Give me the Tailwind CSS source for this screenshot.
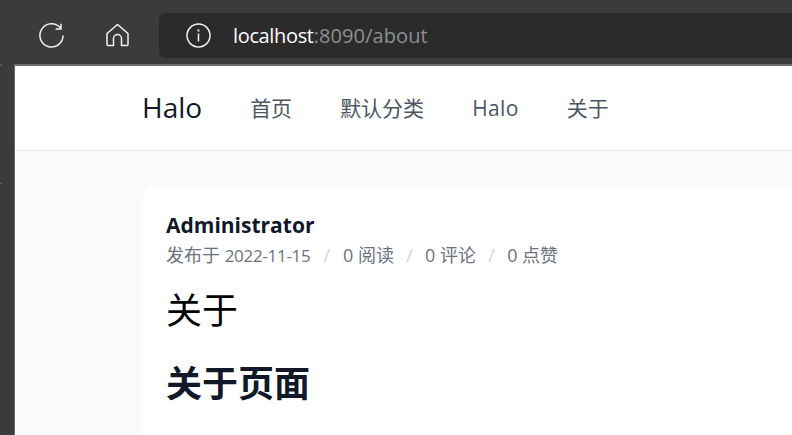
<!DOCTYPE html>
<html>
<head>
<meta charset="utf-8">
<script src="https://cdn.jsdelivr.net/npm/@tailwindcss/browser@4"></script>
</head>
<body class="relative h-[435px] w-[792px] overflow-hidden bg-[#3b3b3b] font-['Open_Sans','Noto_Sans_CJK_SC',sans-serif]">
<div class="flex h-[64px] items-center bg-[#3b3b3b] pt-[7px]">
  <div class="ml-[39px] flex w-[25px] justify-center">
    <svg width="25" height="25" viewBox="0 0 25 25" fill="none" stroke="#f2f2f2" stroke-width="1.5"><path d="M21.6 5.2A11.6 11.6 0 1 0 24.1 12.5"/><path d="M22 .8V5.9H16.6"/></svg>
  </div>
  <div class="ml-[41px] flex w-[24px] justify-center">
    <svg width="23" height="24" viewBox="0 1 23 24" fill="none" stroke="#f2f2f2" stroke-width="1.5" stroke-linejoin="round"><path d="M11.5 1.500 1 10.5V21.5a1 1 0 0 0 1 1H7.5V15.5a4 4 0 0 1 8 0V22.500H21a1 1 0 0 0 1-1V10.500Z"/></svg>
  </div>
  <div class="ml-[30px] flex h-[45px] flex-1 items-center rounded-l-[6px] bg-[#2b2b2b] pl-[27px]">
    <svg width="25" height="25" viewBox="0 0 25 25" fill="none" stroke="#f2f2f2" stroke-width="1.5"><circle cx="12.500" cy="12.500" r="11.500"/><path d="M12.500 10.500v8" stroke-width="1.500"/><path d="M12.500 6.500v2" stroke-width="1.800"/></svg>
    <span class="ml-[22px] text-[20px] tracking-[-0.35px] text-white">localhost<span class="tracking-[0.1px] text-[#8f8f8f]">:8090/about</span></span>
  </div>
</div>
<div class="ml-[14px] h-[2px] bg-[#6b6b6b]"></div>
<div class="ml-[14px] h-[369px] border-l border-[#6b6b6b] bg-[#f8fafc]">
  <header class="flex h-[85px] items-center border-b border-[#e9edf2] bg-white pl-[127px]">
    <span class="pb-[2px] text-[28px] text-[#111827]">Halo</span>
    <nav class="ml-[48px] flex gap-[48px] pt-[2px] text-[21px] text-[#4b5563]">
      <span>首页</span><span>默认分类</span><span class="tracking-[0.4px]">Halo</span><span>关于</span>
    </nav>
  </header>
  <main class="mt-[35px] ml-[127px] h-[249px] overflow-hidden rounded-tl-[16px] bg-white pl-[24px] pt-[25px]">
    <div class="text-[21px] leading-[28px] font-bold text-[#111827]">Administrator</div>
    <div class="mt-[3px] flex text-[18px] leading-[26px] text-[#6b7280]">
      <span>发布于 <span class="text-[17px] tracking-[-0.3px]">2022-11-15</span></span><span class="mx-[13px] text-[#d1d5db]">/</span><span>0 阅读</span><span class="mx-[12.250px] text-[#d1d5db]">/</span><span>0 评论</span><span class="mx-[12.250px] text-[#d1d5db]">/</span><span>0 点赞</span>
    </div>
    <h1 class="mt-[17px] text-[36px] leading-[50px] text-black">关于</h1>
    <h2 class="mt-[23px] text-[36px] leading-[50px] font-bold text-[#111827]">关于页面</h2>
  </main>
</div>
<div class="absolute top-[64px] left-0 h-[2px] w-[2px] bg-[#5c5c5c]"></div>
<div class="absolute top-[183px] left-0 h-[1px] w-[2px] bg-[#5c5c5c]"></div>
</body>
</html>
